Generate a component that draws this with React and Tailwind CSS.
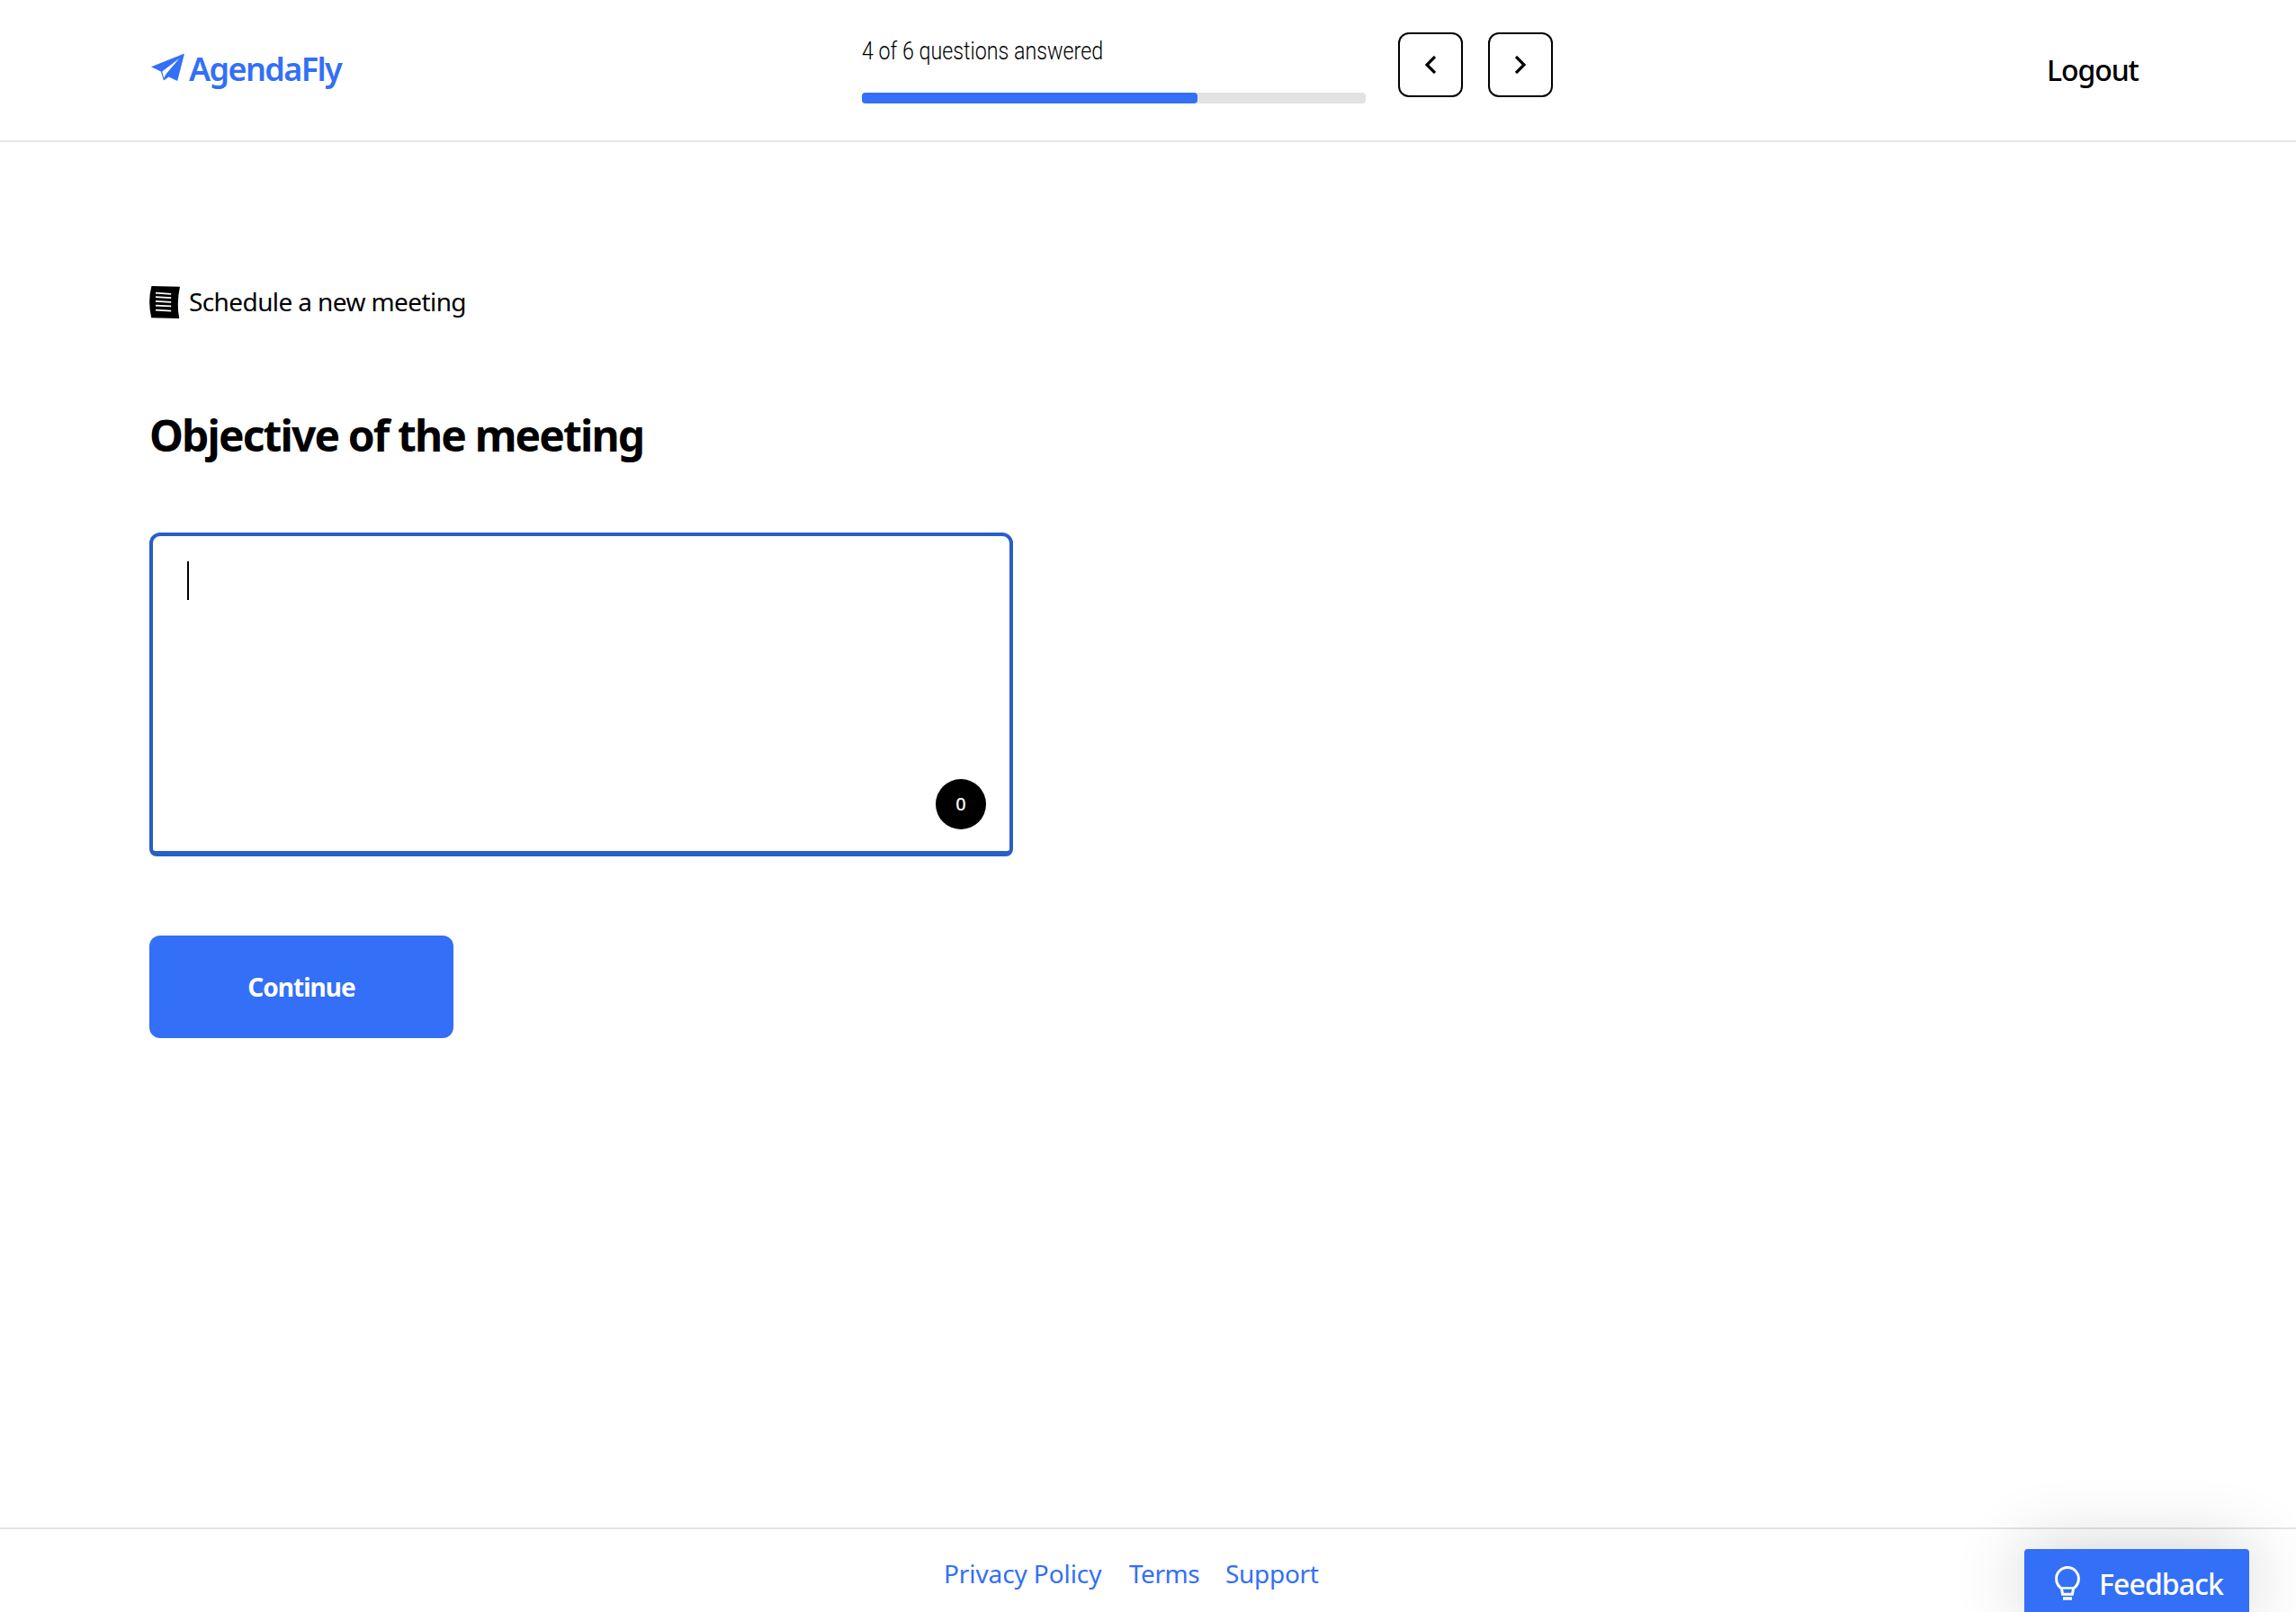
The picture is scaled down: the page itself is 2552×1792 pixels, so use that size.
const PlaneIcon = () => (
  <svg viewBox="0 0 38 32" className="h-8 w-[38px]" fill="#336ff7">
    <path d="M0 15.2 37 .5 29.2 31 19.6 26.6 14 30.4 10.8 20.6Z" />
    <path d="M12.2 20.4 31.5 5.8 16.6 23.2 14.2 27.8Z" fill="#fff" />
  </svg>
);

const NotesIcon = () => (
  <svg viewBox="0 0 34 36" className="h-9 w-[34px]">
    <path d="M2.4 0 34 .8Q30 18 33.2 36L2.2 35.2Q-2 17 2.4 0Z" />
    <path
      d="M7 7.6 24.2 8.8M7 12.2 24.2 13.2M7 16.8 24.2 17.8M7 21.6 24.2 22.4M7 26.6 24.2 27.6"
      stroke="#fff"
      strokeWidth="1.8"
    />
  </svg>
);

const BulbIcon = () => (
  <svg viewBox="0 0 28 38" className="h-[38px] w-7" fill="none" stroke="#fff" strokeWidth="3">
    <path d="M7.400 24.800C3.800 22.400 1.600 18.600 1.600 14a12.400 12.400 0 0 1 24.800 0c0 4.600-2.200 8.400-5.800 10.800L19.400 31.200H8.600Z" />
    <path d="M7 24.400H21" strokeWidth="2.400" />
    <path d="M9 36H19" strokeWidth="3.400" />
  </svg>
);

const Chevron = ({ points }) => (
  <svg viewBox="0 0 12 20" className="h-5 w-3" fill="none" stroke="#000" strokeWidth="3.2">
    <polyline points={points} />
  </svg>
);

const NavButton = ({ label, points }) => (
  <button
    aria-label={label}
    className="flex size-[72px] items-center justify-center rounded-xl border-2 border-black"
  >
    <Chevron points={points} />
  </button>
);

const Header = () => (
  <header className="flex h-[158px] items-start border-b-2 border-[#e4e4e4]">
    <div className="ml-[168px] mt-[59px] flex w-[789px] items-start gap-[4px] leading-9 text-[#336ff7]">
      <PlaneIcon />
      <span className="text-[36px] font-semibold tracking-[-1.6px]">AgendaFly</span>
    </div>
    <div className="w-[561px] pl-px">
      <p className="mt-[37px] h-[66px] origin-left scale-x-[0.83] whitespace-nowrap font-['Roboto',sans-serif] text-[28px] font-light leading-10">
        4 of 6 questions answered
      </p>
      <div className="h-3 rounded bg-[#e2e2e2]">
        <div className="h-3 w-2/3 rounded bg-[#336ff7]" />
      </div>
    </div>
    <div className="ml-9 mt-9 flex gap-7">
      <NavButton label="Previous" points="11,1 2,10 11,19" />
      <NavButton label="Next" points="1,1 10,10 1,19" />
    </div>
    <a className="ml-[549px] mt-[58px] text-[32px] font-medium leading-10 tracking-[-1.1px]">Logout</a>
  </header>
);

const Footer = () => (
  <footer className="flex h-[94px] items-start justify-between border-t-2 border-[#e4e4e4]">
    <nav className="ml-[1049px] mt-[29px] flex text-[28px] leading-10 text-[#336ff7]">
      <a className="w-[206px] tracking-[-0.1px]">Privacy Policy</a>
      <a className="w-[107px] tracking-[-0.5px]">Terms</a>
      <a className="tracking-[-0.3px]">Support</a>
    </nav>
    <button className="mr-[52px] mt-[22px] flex h-[70px] w-[250px] items-start rounded-t bg-[#336ff7] pl-[34px] pt-[19px] text-white shadow-[0_0_80px_rgba(0,0,0,0.2)]">
      <BulbIcon />
      <span className="ml-[21px] text-[32px] font-medium leading-10 tracking-[-0.9px]">Feedback</span>
    </button>
  </footer>
);

const App = () => (
  <div className="flex h-[1792px] w-[2552px] flex-col overflow-hidden bg-white font-['Noto_Sans',sans-serif] text-black">
    <Header />
    <main className="flex-1 pl-[166px] pt-40">
      <div className="flex h-9 items-start gap-[10px]">
        <NotesIcon />
        <span className="-mt-px text-[28px] leading-9 tracking-[-0.6px]">Schedule a new meeting</span>
      </div>
      <h1 className="mt-[100px] text-[48px] font-bold leading-[60px] tracking-[-1.9px]">
        Objective of the meeting
      </h1>
      <div className="mt-[78px] flex h-[360px] w-[960px] justify-between rounded-b-lg rounded-t-xl border-4 border-b-[6px] border-[#285fc8]">
        <span className="ml-[38px] mt-7 h-[43px] w-0.5 bg-black" />
        <span className="mb-6 mr-[26px] flex size-14 items-center justify-center self-end rounded-full bg-black text-xl font-medium text-white">
          0
        </span>
      </div>
      <button className="mt-[88px] h-[114px] w-[338px] rounded-xl bg-[#336ff7] text-[28px] font-bold tracking-[-1px] text-white">
        Continue
      </button>
    </main>
    <Footer />
  </div>
);

export default App;
